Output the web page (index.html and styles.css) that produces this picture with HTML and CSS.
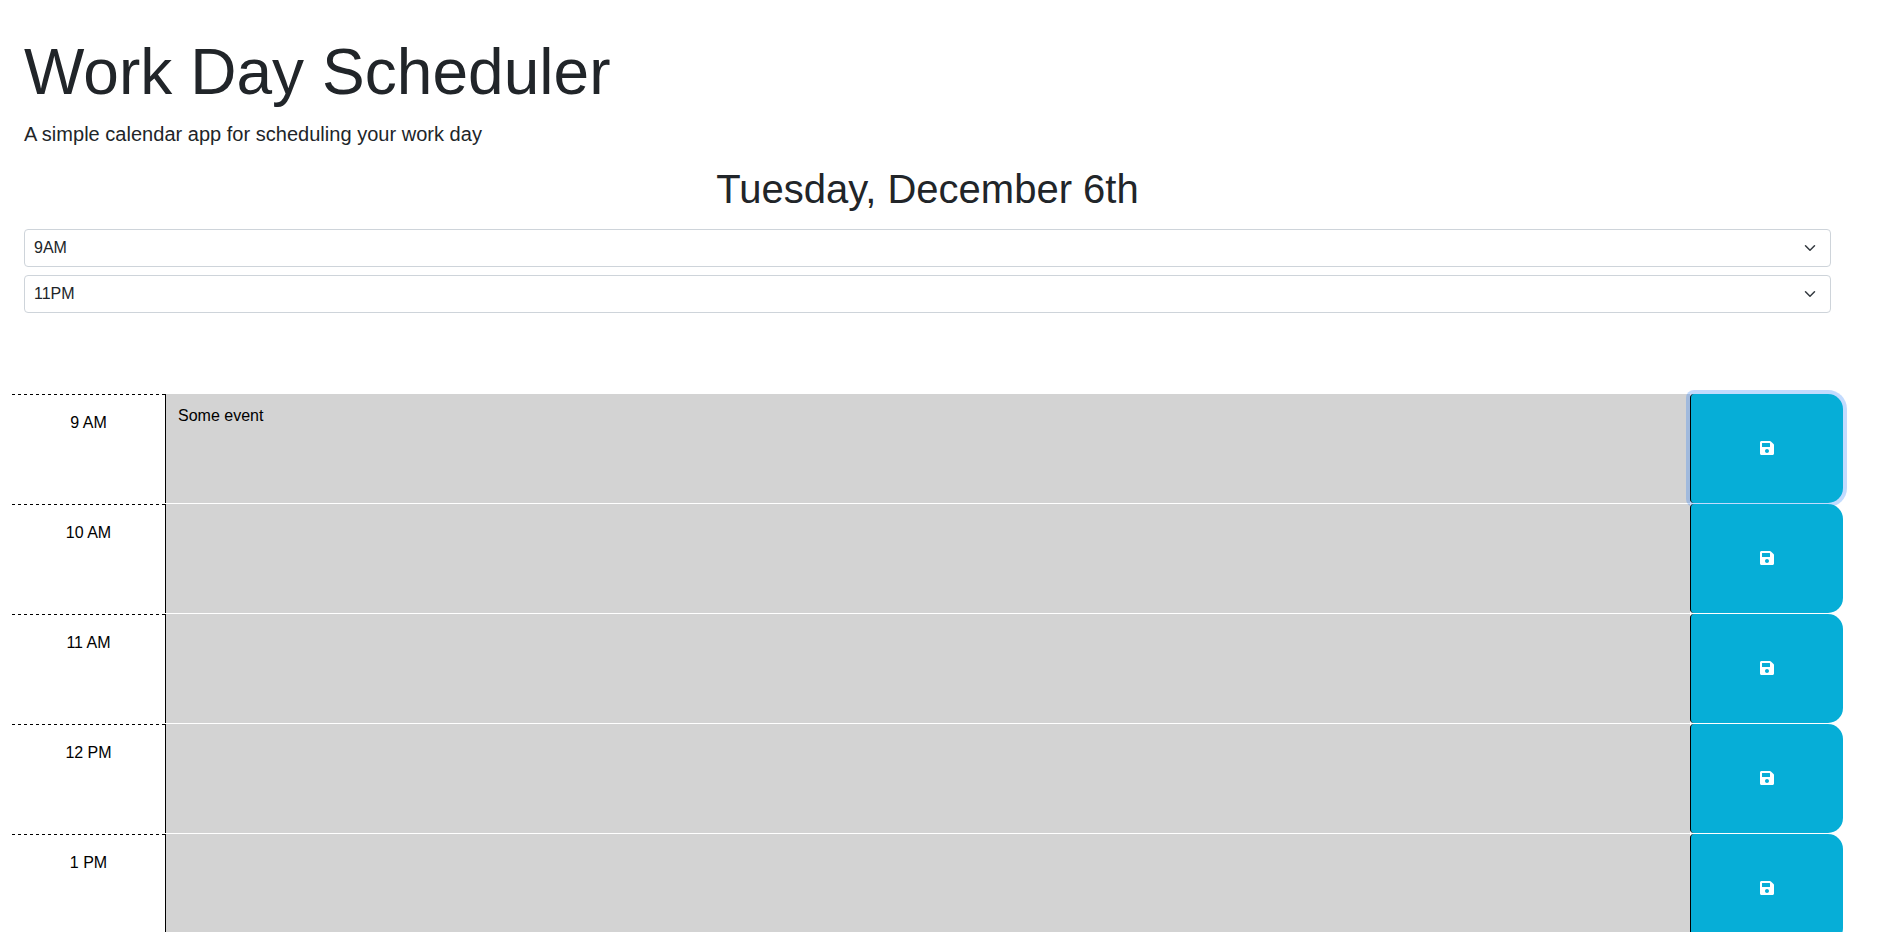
FILE: index.html
```html
<!DOCTYPE html>
<html lang="en">
<head>
<meta charset="utf-8">
<title>Work Day Scheduler</title>
<link rel="stylesheet" href="styles.css">
</head>
<body>
<svg class="sprite" aria-hidden="true">
  <symbol id="save" viewBox="0 0 448 512"><path fill="currentColor" d="M433.941 129.941l-83.882-83.882A48 48 0 0 0 316.118 32H48C21.490 32 0 53.490 0 80v352c0 26.510 21.490 48 48 48h352c26.510 0 48-21.490 48-48V163.882a48 48 0 0 0-14.059-33.941zM224 416c-35.346 0-64-28.654-64-64 0-35.346 28.654-64 64-64s64 28.654 64 64c0 35.346-28.654 64-64 64zm96-304.520V212c0 6.627-5.373 12-12 12H76c-6.627 0-12-5.373-12-12V108c0-6.627 5.373-12 12-12h228.520c3.183 0 6.235 1.264 8.485 3.515l3.480 3.480A11.996 11.996 0 0 1 320 111.480z"/></symbol>
  <symbol id="chevron" viewBox="0 0 16 16"><path fill="none" stroke="#343a40" stroke-linecap="round" stroke-linejoin="round" stroke-width="2" d="m2 5 6 6 6-6"/></symbol>
</svg>
<div class="page">
  <header class="header">
    <h1 class="title">Work Day Scheduler</h1>
    <p class="lead">A simple calendar app for scheduling your work day</p>
    <h2 class="today">Tuesday, December 6th</h2>
    <div class="select"><span>9AM</span><svg class="chevron"><use href="#chevron"/></svg></div>
    <div class="select"><span>11PM</span><svg class="chevron"><use href="#chevron"/></svg></div>
  </header>
  <main class="schedule">
    <div class="row"><div class="hour">9 AM</div><div class="event">Some event</div><button class="save focused"><svg class="icon"><use href="#save"/></svg></button></div>
    <div class="row"><div class="hour">10 AM</div><div class="event"></div><button class="save"><svg class="icon"><use href="#save"/></svg></button></div>
    <div class="row"><div class="hour">11 AM</div><div class="event"></div><button class="save"><svg class="icon"><use href="#save"/></svg></button></div>
    <div class="row"><div class="hour">12 PM</div><div class="event"></div><button class="save"><svg class="icon"><use href="#save"/></svg></button></div>
    <div class="row"><div class="hour">1 PM</div><div class="event"></div><button class="save"><svg class="icon"><use href="#save"/></svg></button></div>
  </main>
</div>
</body>
</html>
```
FILE: styles.css
```css
* { box-sizing: border-box; }
html, body { height: 100%; overflow: hidden; }
body {
  margin: 0;
  background: #fff;
  color: #212529;
  font: 16px/1.5 "Liberation Sans", Arial, sans-serif;
}
.sprite { display: none; }
.page { width: 1855px; }
.header { padding: 34px 24px 0; }
.title { margin: 0 0 8px; font-size: 64px; font-weight: 400; line-height: 77px; letter-spacing: .05px; }
.lead { margin: 0 0 16px; font-size: 20px; line-height: 30px; letter-spacing: .02px; }
.today { margin: 0 0 16px; font-size: 40px; font-weight: 400; line-height: 48px; text-align: center; }
.select {
  display: flex;
  align-items: center;
  justify-content: space-between;
  height: 38px;
  margin-bottom: 8px;
  padding: 0 12px 0 9px;
  border: 1px solid #ced4da;
  border-radius: 4px;
}
.chevron { width: 16px; height: 12px; }
.schedule { padding: 72px 12px 0; }
.row {
  display: grid;
  grid-template-columns: 153px 1fr 153px;
  height: 110px;
  border-top: 1px solid #fff;
}
.hour {
  padding-top: 17px;
  background: repeating-linear-gradient(to right, #000 0 3px, transparent 3px 6px) 0 0 / 100% 1px no-repeat;
  color: #000;
  text-align: center;
}
.event {
  padding: 10px 12px;
  border-left: 1px solid #000;
  background: #d3d3d3;
  color: #000;
}
.save {
  position: relative;
  display: flex;
  align-items: center;
  justify-content: center;
  padding: 0 0 2px;
  border: 0;
  border-left: 1px solid #000;
  border-radius: 4px 15px 15px 4px;
  background: #06aed7;
  color: #fff;
}
.focused { box-shadow: 0 0 0 4px rgba(13, 110, 253, .25); }
.icon { width: 14px; height: 16px; }
```
